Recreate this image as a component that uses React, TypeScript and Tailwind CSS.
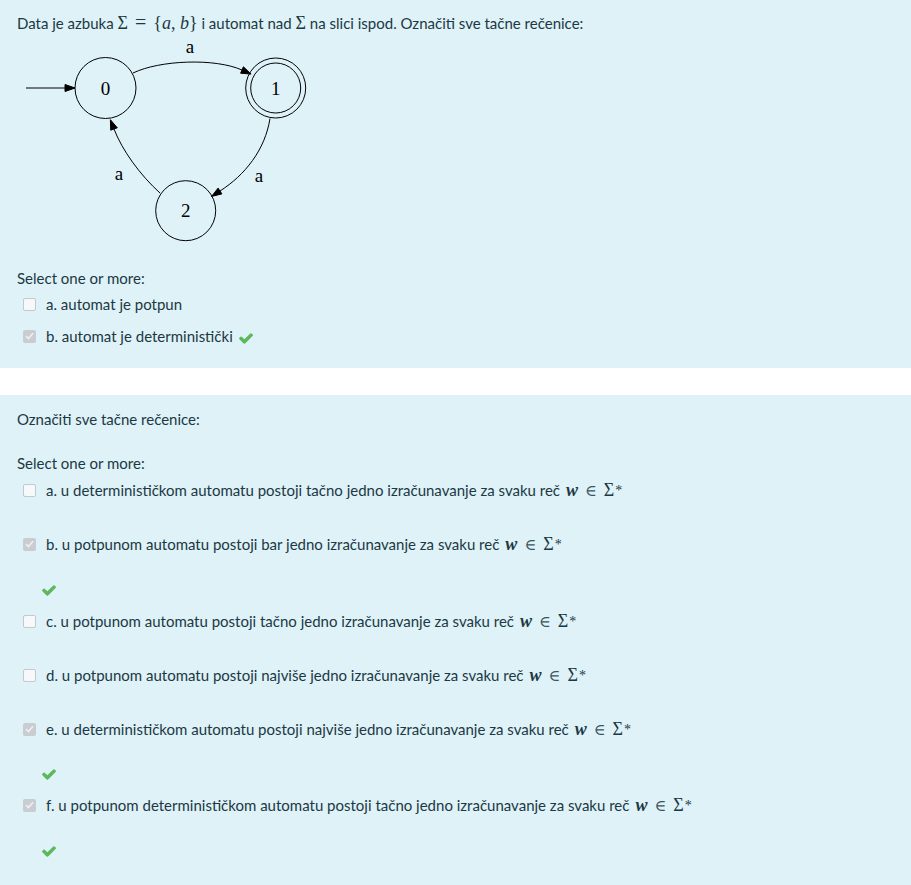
import React from "react";

const mathFont = "font-['Liberation_Serif','DejaVu_Serif',serif]";

function Sigma() {
  return <span className={`${mathFont} text-[18px]`}>Σ</span>;
}

function WinSigma() {
  return (
    <span className={`${mathFont} text-[18px] ml-[6px]`}>
      <span className="italic font-bold">w</span>
      <span className="mx-[7px] text-[16px] text-[#3c5560]">∈</span>
      Σ<sup className="text-[14px] relative -top-[1px] ml-[1px]">*</sup>
    </span>
  );
}

function GreenCheck() {
  return (
    <svg width="14" height="11" viewBox="121 334 1550 1188" className="inline-block">
      <path
        fill="#5cb85c"
        d="M1671 566q0 40-28 68l-724 724-136 136q-28 28-68 28t-68-28l-136-136-362-362q-28-28-28-68t28-68l136-136q28-28 68-28t68 28l294 295 656-657q28-28 68-28t68 28l136 136q28 28 28 68z"
      />
    </svg>
  );
}

function Checkbox({ checked }: { checked: boolean }) {
  if (checked) {
    return (
      <span className="w-[13px] h-[13px] rounded-[2px] bg-[#c9cdd1] flex items-center justify-center shrink-0">
        <svg width="9" height="8" viewBox="0 0 9 8">
          <path d="M1 4.2 L3.4 6.5 L8 1.2" fill="none" stroke="#eef0f2" strokeWidth="1.6" />
        </svg>
      </span>
    );
  }
  return (
    <span className="w-[13px] h-[13px] rounded-[2px] border border-[#c3c9ce] bg-[#f6f8f9] shrink-0" />
  );
}

function Option({
  label,
  checked,
  children,
}: {
  label: string;
  checked: boolean;
  children: React.ReactNode;
}) {
  return (
    <div className="flex items-center h-[22px] pl-[6px]">
      <Checkbox checked={checked} />
      <span className="ml-[10px] whitespace-nowrap">
        {label}. {children}
      </span>
    </div>
  );
}

function Feedback({ className }: { className: string }) {
  return (
    <div className={`${className} h-[22px] pl-[25px] flex items-center`}>
      <GreenCheck />
    </div>
  );
}

function Automaton() {
  return (
    <svg width="300" height="206" viewBox="17 36 300 206" className="block mt-[3px]">
      <g fill="none" stroke="#000" strokeWidth="1">
        <circle cx="105.5" cy="88" r="30.5" />
        <circle cx="275.7" cy="88" r="30" />
        <circle cx="275.7" cy="88" r="25" />
        <circle cx="185.7" cy="210.7" r="30" />
        <line x1="26" y1="88" x2="66" y2="88" />
        <path d="M133 73 C160 60 215 58 242 70" />
        <path d="M270 118.5 C265 150 245 175 220 191" />
        <path d="M160 193 C140 175 122 150 114 129" />
      </g>
      <g fill="#000" stroke="#000" strokeWidth="1">
        <polygon points="75,88 65,84.5 65,91.5" />
        <polygon points="251.1,74.1 240.6,73.2 243.4,66.8" />
        <polygon points="211.6,196.4 218.1,188.1 221.9,193.9" />
        <polygon points="110.4,119.7 117.3,127.8 110.7,130.2" />
      </g>
      <g fill="#000" fontFamily="'Liberation Serif', serif" fontSize="19" textAnchor="middle">
        <text x="105.5" y="94.5">0</text>
        <text x="275.7" y="94.5">1</text>
        <text x="185.7" y="217">2</text>
        <text x="190" y="52.5">a</text>
        <text x="119" y="179.5">a</text>
        <text x="259" y="181.5">a</text>
      </g>
    </svg>
  );
}

export default function App() {
  return (
    <div className="min-h-screen bg-white text-[15px] leading-[22px] text-[#1c3843] font-['Lato','Noto_Sans',sans-serif]">
      {/* Pitanje 1 */}
      <div className="bg-[#def2f8] px-[17px] pt-[11px] pb-[21px]">
        <p className="h-[22px] whitespace-nowrap">
          Data je azbuka{" "}
          <span className={`${mathFont} text-[18px]`}>
            Σ<span className="mx-[7px] text-[20px]">=</span>
            {"{"}
            <span className="italic">a</span>, <span className="italic">b</span>
            {"}"}
          </span>{" "}
          i automat nad <Sigma /> na slici ispod. Označiti sve tačne rečenice:
        </p>

        <Automaton />

        <p className="mt-[25px] h-[22px]">Select one or more:</p>
        <div className="mt-[4px]">
          <Option label="a" checked={false}>
            automat je potpun
          </Option>
        </div>
        <div className="mt-[10px]">
          <Option label="b" checked>
            automat je deterministički{" "}
            <span className="ml-[2px]">
              <GreenCheck />
            </span>
          </Option>
        </div>
      </div>

      {/* Pitanje 2 */}
      <div className="mt-[27px] bg-[#def2f8] px-[17px] pt-[13px] pb-[30px]">
        <p className="h-[22px]">Označiti sve tačne rečenice:</p>
        <p className="mt-[22px] h-[22px]">Select one or more:</p>

        <div className="mt-[5px] flex flex-col">
          <Option label="a" checked={false}>
            u determinističkom automatu postoji tačno jedno izračunavanje za svaku reč
            <WinSigma />
          </Option>

          <div className="mt-[32px]">
            <Option label="b" checked>
              u potpunom automatu postoji bar jedno izračunavanje za svaku reč
              <WinSigma />
            </Option>
          </div>
          <Feedback className="mt-[24px]" />

          <div className="mt-[9px]">
            <Option label="c" checked={false}>
              u potpunom automatu postoji tačno jedno izračunavanje za svaku reč
              <WinSigma />
            </Option>
          </div>

          <div className="mt-[32px]">
            <Option label="d" checked={false}>
              u potpunom automatu postoji najviše jedno izračunavanje za svaku reč
              <WinSigma />
            </Option>
          </div>

          <div className="mt-[32px]">
            <Option label="e" checked>
              u determinističkom automatu postoji najviše jedno izračunavanje za svaku reč
              <WinSigma />
            </Option>
          </div>
          <Feedback className="mt-[23px]" />

          <div className="mt-[9px]">
            <Option label="f" checked>
              u potpunom determinističkom automatu postoji tačno jedno izračunavanje za svaku reč
              <WinSigma />
            </Option>
          </div>
          <Feedback className="mt-[24px]" />
        </div>
      </div>
    </div>
  );
}
